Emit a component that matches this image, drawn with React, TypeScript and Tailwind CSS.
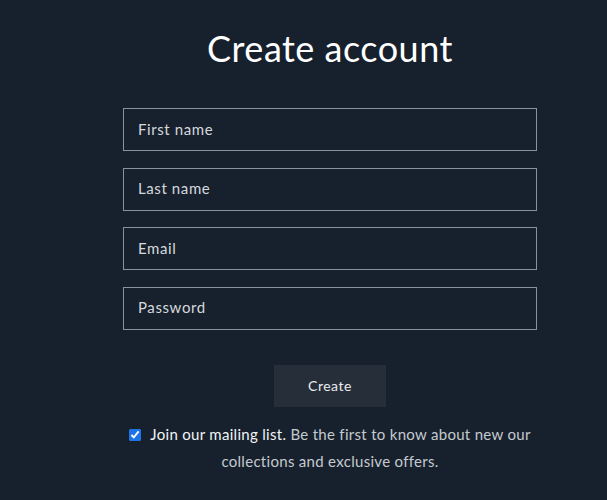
import React from "react";

export default function App() {
  const fields = ["First name", "Last name", "Email", "Password"];
  return (
    <div
      className="min-h-[500px] w-full bg-[#17212d] text-white"
      style={{ fontFamily: "Lato, 'Open Sans', sans-serif" }}
    >
      <div className="ml-[123px] w-[414px] pt-[26px]">
        <h1 className="text-center text-[36px] leading-[44px] font-normal tracking-[0.5px] text-white">
          Create account
        </h1>
        <div className="mt-[38px] flex flex-col gap-[16.5px]">
          {fields.map((f) => (
            <div
              key={f}
              className="flex h-[43px] items-center border border-[#8a939b] px-[14px] pb-[1px] text-[15px] tracking-[0.6px] text-[#d5d9dd]"
            >
              {f}
            </div>
          ))}
        </div>
        <div className="mt-[35px] flex justify-center">
          <button className="h-[42px] w-[112px] bg-[#262f39] text-[14px] tracking-[0.5px] text-[#e9ecef]">
            Create
          </button>
        </div>
        <p className="mt-[14px] -mx-[4px] text-center text-[15px] leading-[27px] tracking-[0.3px] text-[#c5cad0]">
          <input
            type="checkbox"
            defaultChecked
            className="mr-[9px] inline-block h-[12px] w-[12px] align-[-1px] accent-[#1a73e8]"
          />
          <span className="font-normal text-[#f2f4f6]">Join our mailing list.</span> Be the first to know about new our collections and exclusive offers.
        </p>
      </div>
    </div>
  );
}
